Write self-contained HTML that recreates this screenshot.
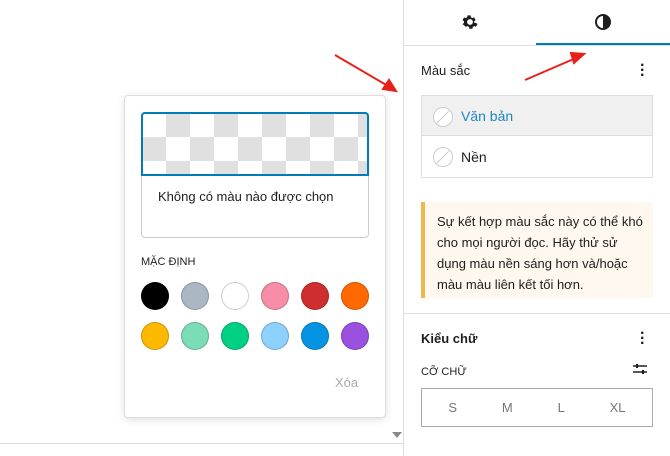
<!DOCTYPE html><html><head><meta charset="utf-8"><style>
*{box-sizing:border-box;margin:0;padding:0}
body{width:670px;height:456px;position:relative;overflow:hidden;background:#fff;font-family:"Liberation Sans","Noto Sans CJK JP",sans-serif;color:#1e1e1e;font-size:13px}
.a{position:absolute}
.sw{position:absolute;width:28px;height:28px;border-radius:50%;box-shadow:inset 0 0 0 1px rgba(0,0,0,.2)}
</style></head><body>
<div class="a" style="left:0;top:443px;width:403px;height:1px;background:#ddd"></div>
<div class="a" style="left:392px;top:432px;width:0;height:0;border-left:5px solid transparent;border-right:5px solid transparent;border-top:6px solid #888"></div>
<div class="a" style="left:403px;top:0;width:1px;height:456px;background:#ddd"></div>
<div class="a" style="left:404px;top:45px;width:266px;height:1px;background:#ddd"></div>
<div class="a" style="left:536px;top:43px;width:134px;height:2px;background:#007cba"></div>
<svg class="a" style="left:460px;top:12px" width="20" height="20" viewBox="0 0 24 24"><path fill="#1e1e1e" d="M12 8.5a3.5 3.5 0 1 0 0 7 3.5 3.5 0 0 0 0-7zm7.2 4.6l1.8 1.4-1.9 3.2-2.1-.8c-.5.4-1.1.7-1.700 1l-.3 2.2h-3.8l-.3-2.2c-.6-.3-1.2-.6-1.7-1l-2.1.8L3 14.5l1.8-1.4c-.1-.7-.1-1.4 0-2L3 9.7l1.9-3.2 2.1.8c.5-.4 1.1-.7 1.7-1L9 4h3.8l.3 2.3c.6.3 1.2.6 1.7 1l2.1-.8 1.9 3.2-1.8 1.4c.1.7.1 1.3.2 2z"/></svg>
<svg class="a" style="left:594px;top:13px" width="18" height="18" viewBox="0 0 18 18"><circle cx="9" cy="9" r="7" fill="none" stroke="#1e1e1e" stroke-width="2"/><path d="M9 2a7 7 0 0 1 0 14z" fill="#1e1e1e"/></svg>
<div class="a" style="left:421px;top:63px;font-size:13px;font-weight:500">Màu sắc</div>
<div class="a" style="left:640px;top:63px;font-size:16px;line-height:5px;font-weight:bold;width:4px">·<br>·<br>·</div>
<div class="a" style="left:421px;top:95px;width:232px;height:83px;border:1px solid #ddd"></div>
<div class="a" style="left:422px;top:96px;width:230px;height:40px;background:#f0f0f0;border-bottom:1px solid #ddd"></div>
<svg class="a" style="left:432px;top:106px" width="22" height="22"><circle cx="11" cy="11" r="9.5" fill="#fff" stroke="#ccc"/><line x1="5" y1="17" x2="17" y2="5" stroke="#ccc"/></svg>
<div class="a" style="left:461px;top:108px;color:#1e88c7;font-size:14px">Văn bản</div>
<svg class="a" style="left:432px;top:146px" width="22" height="22"><circle cx="11" cy="11" r="9.5" fill="#fff" stroke="#ccc"/><line x1="5" y1="17" x2="17" y2="5" stroke="#ccc"/></svg>
<div class="a" style="left:461px;top:149px;font-size:14px">Nền</div>
<div class="a" style="left:421px;top:202px;width:232px;height:96px;background:#fef8ee;border-left:4px solid #f0b849;padding:9px 8px 0 12px;font-size:13px;line-height:21px">Sự kết hợp màu sắc này có thể khó cho mọi người đọc. Hãy thử sử dụng màu nền sáng hơn và/hoặc màu màu liên kết tối hơn.</div>
<div class="a" style="left:404px;top:313px;width:266px;height:1px;background:#ddd"></div>
<div class="a" style="left:421px;top:331px;font-weight:bold;font-size:13px">Kiểu chữ</div>
<div class="a" style="left:640px;top:331px;font-size:16px;line-height:5px;font-weight:bold;width:4px">·<br>·<br>·</div>
<div class="a" style="left:421px;top:366px;font-size:11px;font-weight:500">CỠ CHỮ</div>
<svg class="a" style="left:632px;top:362px" width="16" height="14"><line x1="1" y1="4" x2="15" y2="4" stroke="#1e1e1e" stroke-width="1.5"/><line x1="1" y1="10" x2="15" y2="10" stroke="#1e1e1e" stroke-width="1.5"/><rect x="4" y="2" width="2" height="4" fill="#1e1e1e"/><rect x="10" y="8" width="2" height="4" fill="#1e1e1e"/></svg>
<div class="a" style="left:421px;top:388px;width:232px;height:39px;border:1px solid #aaa;display:flex;justify-content:space-around;align-items:center;color:#757575;font-size:13px;padding:0 4px"><span>S</span><span>M</span><span>L</span><span>XL</span></div>
<div class="a" style="left:124px;top:95px;width:262px;height:323px;background:#fff;border:1px solid #ddd;border-radius:4px;box-shadow:0 2px 8px rgba(0,0,0,.12)"></div>
<div class="a" style="left:141px;top:112px;width:228px;height:126px;border:1px solid #ccc;border-radius:4px"></div>
<div class="a" style="left:141px;top:112px;width:228px;height:64px;border:2px solid #007cba;border-radius:4px 4px 0 0;background-color:#fff;background-image:conic-gradient(#e0e0e0 25%,#fff 0 50%,#e0e0e0 0 75%,#fff 0);background-size:48px 48px;background-position:-1px -1px"></div>
<div class="a" style="left:158px;top:189px;font-size:13px">Không có màu nào được chọn</div>
<div class="a" style="left:141px;top:256px;font-size:11px;font-weight:500">MẶC ĐỊNH</div>
<div class="sw" style="left:141px;top:282px;background:#000"></div>
<div class="sw" style="left:181px;top:282px;background:#abb8c3"></div>
<div class="sw" style="left:221px;top:282px;background:#fff"></div>
<div class="sw" style="left:261px;top:282px;background:#f78da7"></div>
<div class="sw" style="left:301px;top:282px;background:#cf2e2e"></div>
<div class="sw" style="left:341px;top:282px;background:#ff6900"></div>
<div class="sw" style="left:141px;top:322px;background:#fcb900"></div>
<div class="sw" style="left:181px;top:322px;background:#7bdcb5"></div>
<div class="sw" style="left:221px;top:322px;background:#00d084"></div>
<div class="sw" style="left:261px;top:322px;background:#8ed1fc"></div>
<div class="sw" style="left:301px;top:322px;background:#0693e3"></div>
<div class="sw" style="left:341px;top:322px;background:#9b51e0"></div>
<div class="a" style="left:335px;top:375px;color:#aaa;font-size:13px">Xóa</div>
<svg class="a" style="left:0;top:0" width="670" height="456"><g stroke="#e8201a" stroke-width="2" fill="#e8201a"><line x1="335" y1="55" x2="388" y2="86"/><polygon points="396,91 383,89 389,80"/><line x1="525" y1="80" x2="576" y2="58"/><polygon points="584,54 574,63 571,53"/></g></svg>
</body></html>
